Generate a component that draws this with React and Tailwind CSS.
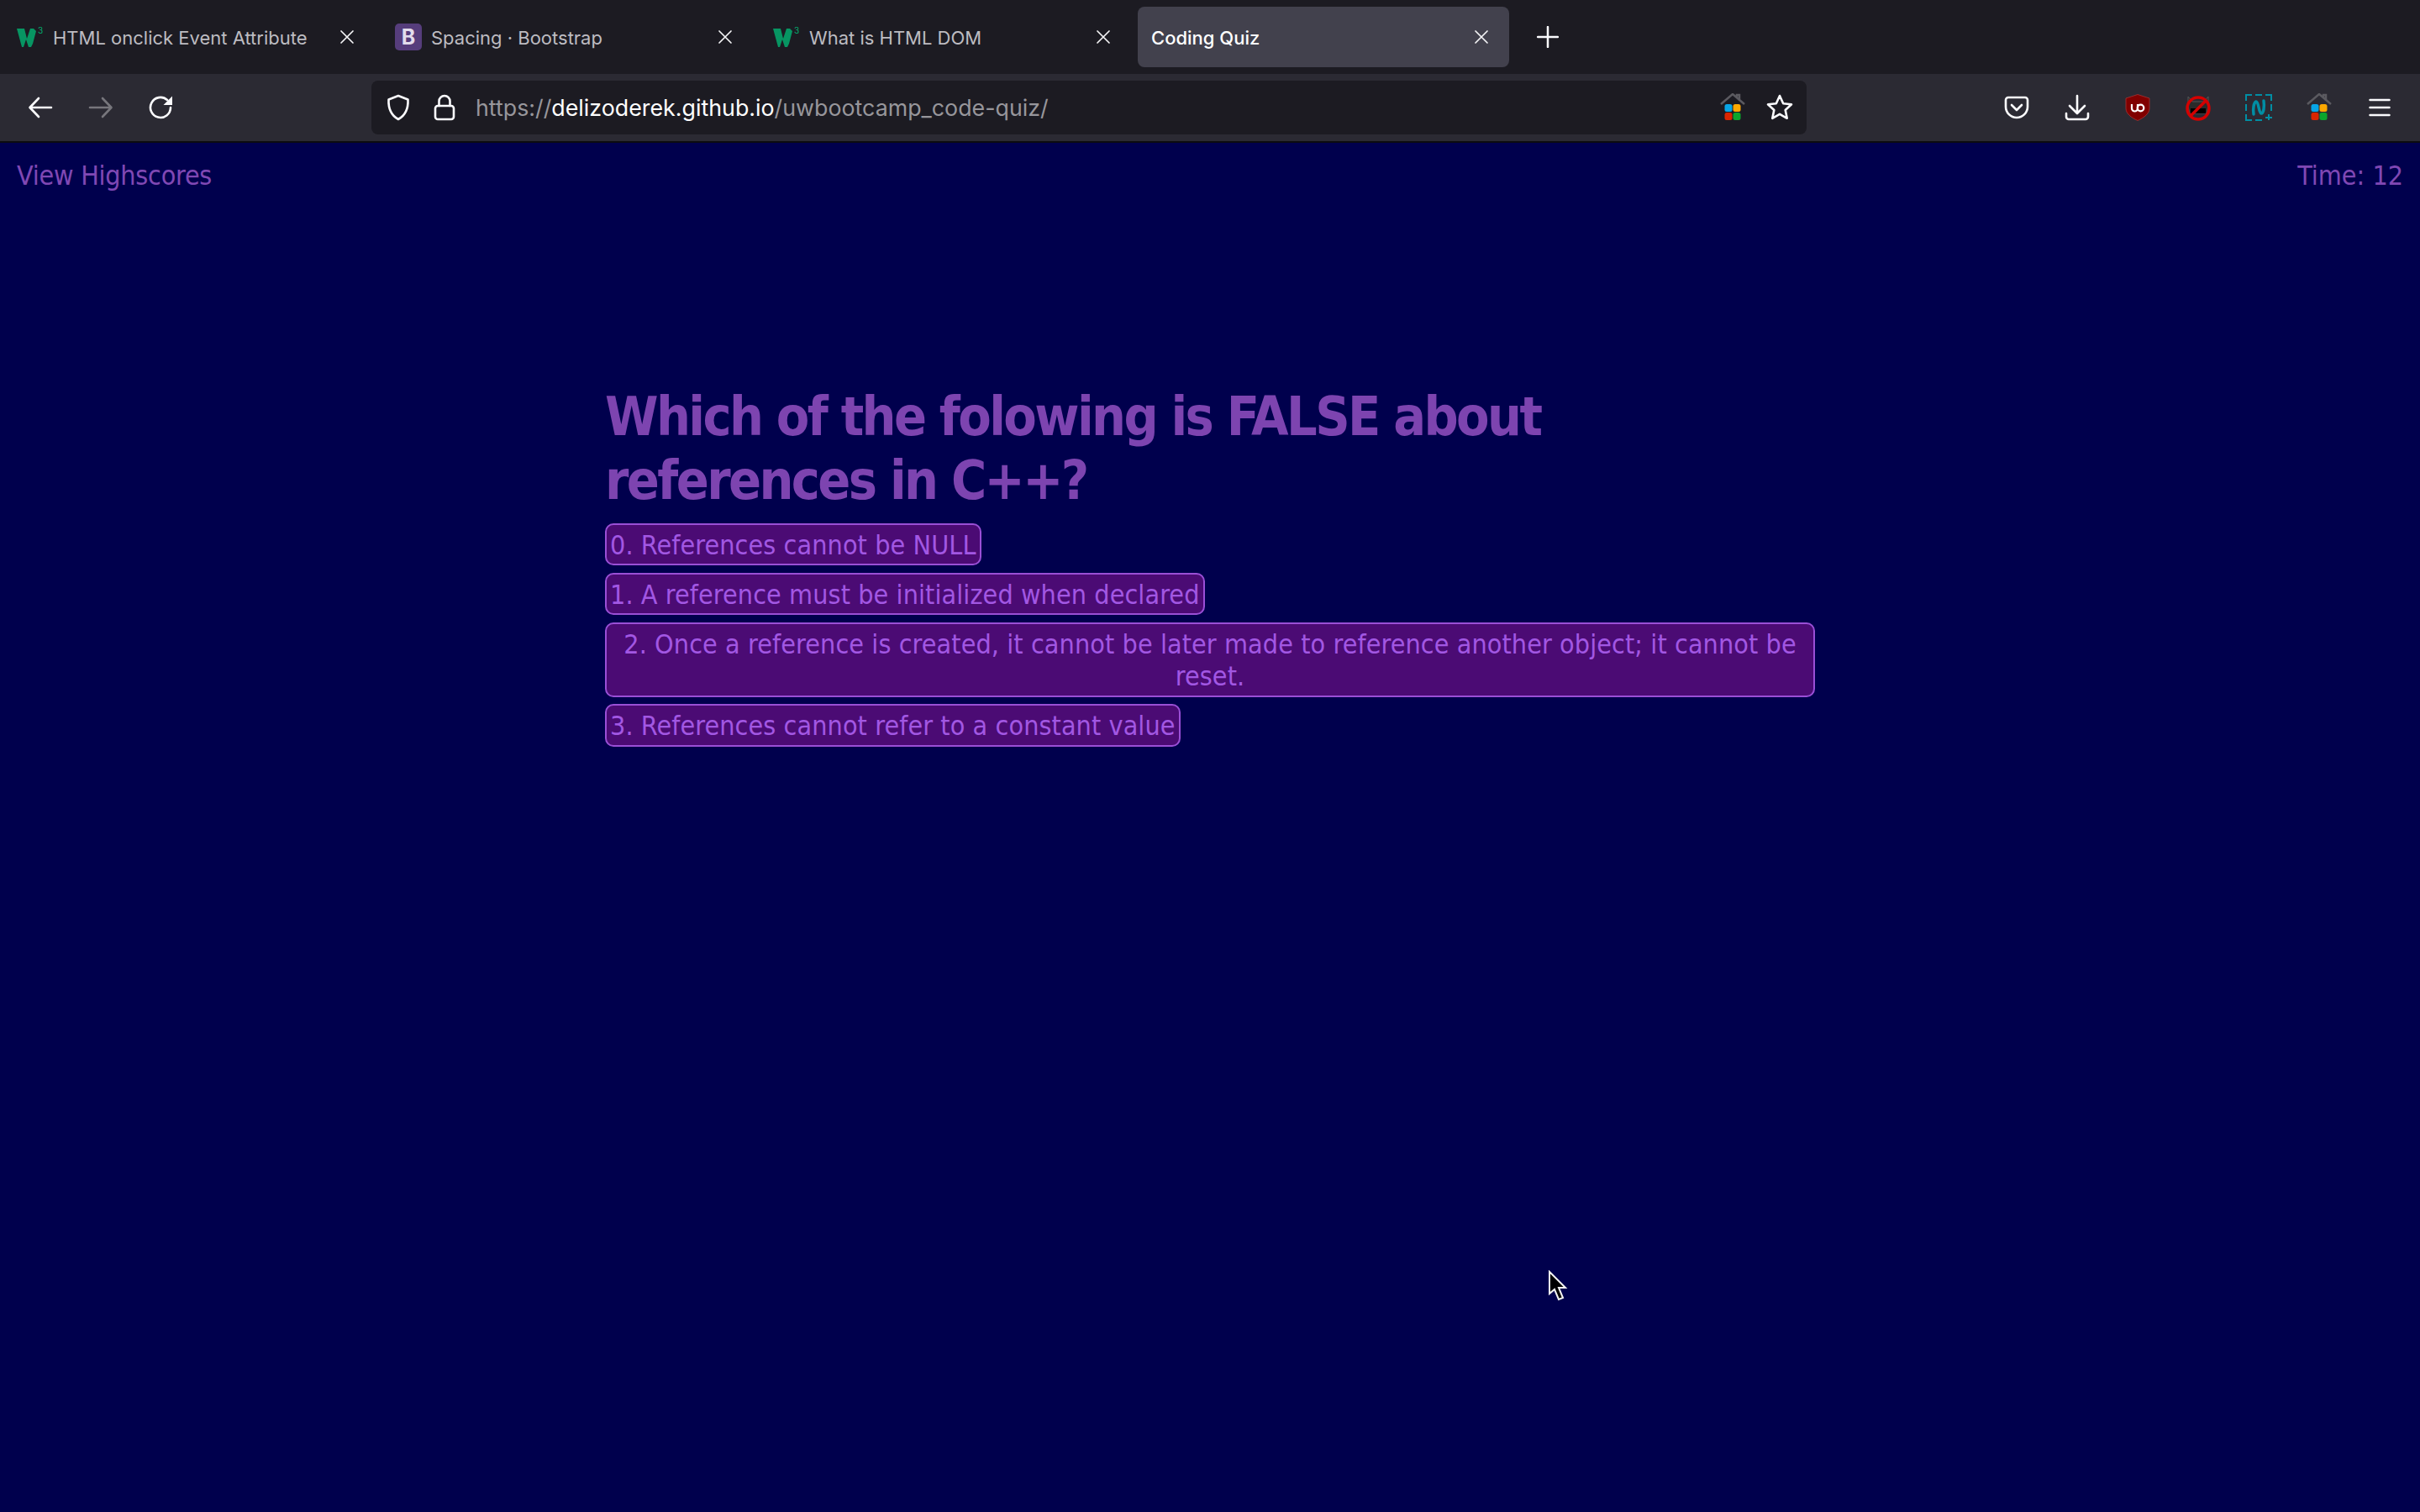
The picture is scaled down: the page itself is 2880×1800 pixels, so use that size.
import React from 'react'

const uiFont = 'font-["Inter","Liberation_Sans",sans-serif]'
const quizFont = 'font-["DejaVu_Sans_Condensed","DejaVu_Sans",sans-serif]'

function W3Icon() {
  return (
    <svg width="32" height="26" viewBox="0 0 32 26" className="shrink-0">
      <path d="M0 3h9l3 12 4-12h4l3 3-4 15-2 4h-3l-3-9-3 9H6z" fill="#04aa6d" opacity="0.85" />
      <text x="25" y="9" fontSize="10" fill="#04aa6d" fontFamily="Inter, sans-serif">3</text>
    </svg>
  )
}

function BootstrapIcon() {
  return (
    <div className="w-8 h-8 shrink-0 rounded-[5px] bg-[#563d7c] flex items-center justify-center text-[#e3dcec] text-[25px] font-bold leading-none">B</div>
  )
}

function CloseIcon() {
  return (
    <svg width="18" height="18" viewBox="0 0 18 18" className="shrink-0">
      <path d="M2 2l14 14M16 2L2 16" stroke="#f4f4f6" strokeWidth="1.700" strokeLinecap="round" />
    </svg>
  )
}

function Tab({ icon, title, active }) {
  return (
    <div className={`w-[442px] h-[72px] rounded-lg flex items-center pl-4 pr-6 ${active ? 'bg-[#42414d] text-white font-medium' : 'text-[#bdbcc1]'}`}>
      {icon}
      <span className={`text-[22px] pt-[2px] whitespace-nowrap ${icon ? 'ml-[11px]' : ''}`}>{title}</span>
      <div className="ml-auto"><CloseIcon /></div>
    </div>
  )
}

function HomeColors({ className }) {
  return (
    <svg width="32" height="34" viewBox="0 0 32 34" className={className}>
      <path d="M2 13L16 1l14 12M21 5V2h3v7" fill="none" stroke="#5b5a60" strokeWidth="2.500" />
      <rect x="6.500" y="13" width="9" height="9" rx="2.500" fill="#08a5e6" />
      <rect x="16.500" y="13" width="9" height="9" rx="2.500" fill="#fca800" />
      <rect x="6.500" y="23" width="9" height="9" rx="2.500" fill="#d92500" />
      <rect x="16.500" y="23" width="9" height="9" rx="2.500" fill="#0ba52c" />
    </svg>
  )
}

const Btn = ({ children }) => <div className="w-[72px] flex justify-center shrink-0">{children}</div>

function Toolbar() {
  const stroke = { fill: 'none', stroke: '#fbfbfe', strokeWidth: 2.6, strokeLinecap: 'round', strokeLinejoin: 'round' }
  return (
    <div className="h-20 bg-[#2b2a33] flex items-center pl-3">
      <Btn>
        <svg width="30" height="26" viewBox="0 0 30 26"><path d="M28 13H3M13 2L2.500 13 13 24" {...stroke} /></svg>
      </Btn>
      <Btn>
        <svg width="30" height="26" viewBox="0 0 30 26"><path d="M2 13h25M17 2l10.500 11L17 24" {...stroke} stroke="#77767c" /></svg>
      </Btn>
      <Btn>
        <svg width="30" height="30" viewBox="0 0 30 30">
          <path d="M26 15a12 12 0 1 1-4-9" {...stroke} />
          <path d="M28 1.500V12H17.500z" fill="#fbfbfe" />
        </svg>
      </Btn>
      <div className="w-[1708px] h-16 ml-[214px] rounded-lg bg-[#1c1b22] flex items-center pl-[18px] pr-[15px]">
        <svg width="28" height="32" viewBox="0 0 28 32" className="shrink-0">
          <path d="M14 2l11.500 4.500C26 17 23 25 14 30 5 25 2 17 2.500 6.500z" {...stroke} />
        </svg>
        <svg width="26" height="32" viewBox="0 0 26 32" className="shrink-0 ml-[28px]">
          <rect x="2" y="14" width="22" height="16" rx="3" {...stroke} />
          <path d="M6.500 14V8.500a6.500 6.500 0 0 1 13 0V14" {...stroke} />
        </svg>
        <div className={`ml-[24px] text-[26.800px] text-[#97969b] whitespace-nowrap ${uiFont}`}>
          https://<span className="text-white">delizoderek.github.io</span>/uwbootcamp_code-quiz/
        </div>
        <HomeColors className="ml-auto shrink-0" />
        <svg width="34" height="34" viewBox="0 0 34 34" className="shrink-0 ml-[23px]">
          <path d="M17 3l4.200 9.200 9.800 1.100-7.300 6.700 2 9.800-8.700-5-8.700 5 2-9.800L3 13.300l9.800-1.100z" {...stroke} />
        </svg>
      </div>
      <div className="flex items-center ml-[214px]">
        <Btn>
          <svg width="30" height="28" viewBox="0 0 30 28">
            <path d="M5 2h20a3 3 0 0 1 3 3v8a13 13 0 0 1-26 0V5a3 3 0 0 1 3-3z" {...stroke} />
            <path d="M9 11l6 6 6-6" {...stroke} />
          </svg>
        </Btn>
        <Btn>
          <svg width="30" height="32" viewBox="0 0 30 32">
            <path d="M15 2v20M6 14l9 9 9-9M2 23v4a3 3 0 0 0 3 3h20a3 3 0 0 0 3-3v-4" {...stroke} />
          </svg>
        </Btn>
        <Btn>
          <svg width="30" height="32" viewBox="0 0 30 32">
            <path d="M15 0.500l14 4.500v12c0 6-6 11-14 14.500C7 28 1 23 1 17V5z" fill="#800000" stroke="#a33" strokeWidth="0.800" />
            <path d="M8 12v5a3.500 3.500 0 0 0 7 0v-5" fill="none" stroke="#fff" strokeWidth="2.200" />
            <circle cx="18.500" cy="16.500" r="3.800" fill="none" stroke="#fff" strokeWidth="2.200" />
          </svg>
        </Btn>
        <Btn>
          <svg width="30" height="32" viewBox="0 0 30 32">
            <path d="M3 3l5 6h14l5-6 0 12-2 8H5L3 15z" fill="#2a2a2a" stroke="#555" strokeWidth="1" />
            <path d="M6 17h18v6H6z" fill="#000" />
            <circle cx="15" cy="17" r="13" fill="none" stroke="#d40000" strokeWidth="3.500" />
            <path d="M24 8L6 26" stroke="#d40000" strokeWidth="3.500" />
          </svg>
        </Btn>
        <Btn>
          <svg width="32" height="32" viewBox="0 0 32 32">
            <path d="M1 8V1h7M12 1h8M24 1h7v7M31 12v8M1 12v8M1 24v7h7M12 31h8M24 28h8M28 24v7" fill="none" stroke="#008ea4" strokeWidth="2" />
            <path d="M10 24c-1-6 0-14 3-15 3 0 3 13 6 14 3 0 4-8 3-15" fill="none" stroke="#008ea4" strokeWidth="3.500" strokeLinecap="round" />
          </svg>
        </Btn>
        <Btn><HomeColors /></Btn>
        <Btn>
          <svg width="26" height="22" viewBox="0 0 26 22"><path d="M1.500 2h23M1.500 11h23M1.500 20h23" stroke="#fbfbfe" strokeWidth="2.500" strokeLinecap="round" /></svg>
        </Btn>
      </div>
    </div>
  )
}

const answers = [
  '0. References cannot be NULL',
  '1. A reference must be initialized when declared',
  '2. Once a reference is created, it cannot be later made to reference another object; it cannot be reset.',
  '3. References cannot refer to a constant value',
]

export default function App() {
  return (
    <div className="relative w-[2880px] h-[1800px] overflow-hidden bg-[#00004d]">
      <div className={`h-[88px] bg-[#1c1b22] flex items-center pl-1 gap-2 ${uiFont}`}>
        <Tab icon={<W3Icon />} title="HTML onclick Event Attribute" />
        <Tab icon={<BootstrapIcon />} title="Spacing · Bootstrap" />
        <Tab icon={<W3Icon />} title="What is HTML DOM" />
        <Tab title="Coding Quiz" active />
        <svg width="26" height="26" viewBox="0 0 26 26" className="ml-[25px]">
          <path d="M13 1v24M1 13h24" stroke="#fbfbfe" strokeWidth="2.500" strokeLinecap="round" />
        </svg>
      </div>
      <Toolbar />
      <div className="h-[2px] bg-[#0c0c10]" />

      <div className={quizFont}>
        <div className="flex justify-between px-5 pt-5 text-[32px] leading-[38px] text-[#8048b4]">
          <span className="tracking-[-0.25px]">View Highscores</span>
          <span>Time: 12</span>
        </div>
        <div className="w-[1440px] mx-auto mt-[230px]">
          <h1 className="max-w-[1300px] text-[64px] leading-[76px] font-bold tracking-[-2.6px] text-[#7d44b0]">
            Which of the folowing is FALSE about references in C++?
          </h1>
          <div className="flex flex-col items-start gap-[8.500px] mt-[13px]">
            {answers.map(a => (
              <button key={a} className="border-2 border-[#9a4fd6] rounded-[10px] bg-[#4b0b74] text-[#a257e3] text-[32px] leading-[38.400px] tracking-[0.08px] pt-[5px] pb-[3px] px-1 text-center">
                {a}
              </button>
            ))}
          </div>
        </div>
      </div>

      {/* mouse pointer */}
      <svg width="24" height="38" viewBox="0 0 24 38" className="absolute left-[1842px] top-[1512px]">
        <path d="M2 2v26l6-5 5 12 5-2-5-12h8z" fill="#000" stroke="#f2f2f2" strokeWidth="2" />
      </svg>
    </div>
  )
}
